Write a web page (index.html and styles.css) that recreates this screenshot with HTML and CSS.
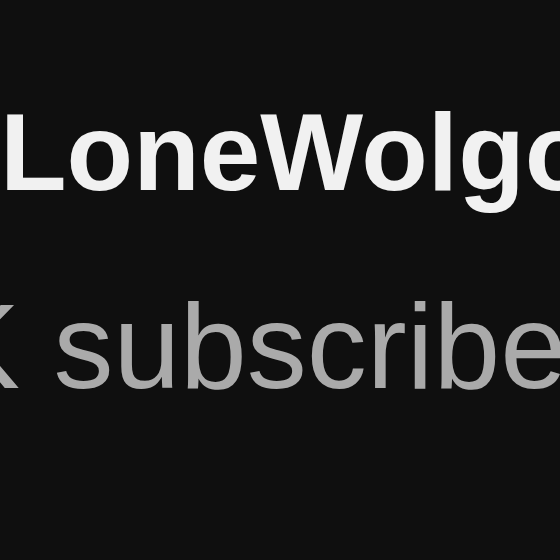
FILE: index.html
```html
<!DOCTYPE html>
<html lang="en">

<head>
    <meta charset="UTF-8">
    <meta name="viewport" content="width=device-width, initial-scale=1.0">
    <title>Channel</title>
    <link rel="stylesheet" href="styles.css">
</head>

<body>

    <div class="channel">
        <div class="channel-name">LoneWolgo</div>
        <div class="channel-subs">K subscribers</div>
    </div>

</body>

</html>
```

FILE: styles.css
```css
html,
body {
    margin: 0;
    height: 100%;
    overflow: hidden;
    background-color: #0f0f0f;
}

body {
    font-family: "Liberation Sans", Arial, sans-serif;
}

.channel {
    padding-top: 98px;
    white-space: nowrap;
}

.channel-name {
    color: #f1f1f1;
    font-size: 109px;
    font-weight: 700;
    line-height: 109px;
}

.channel-subs {
    color: #aaaaaa;
    font-size: 120px;
    font-weight: 400;
    line-height: 120px;
    margin-top: 79px;
    margin-left: -60px;
}
```
